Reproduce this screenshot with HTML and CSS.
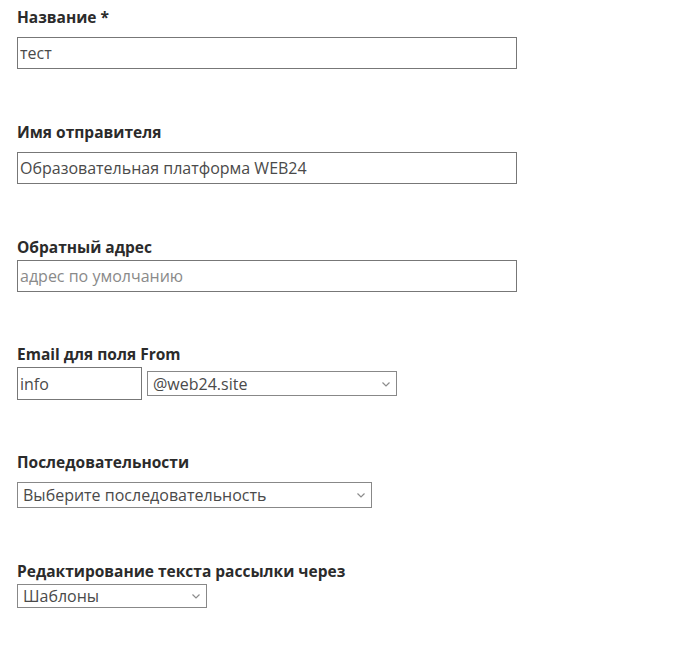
FILE: index.html
```html
<!DOCTYPE html>
<html lang="ru">
<head>
    <meta charset="UTF-8" />
    <meta name="viewport" content="width=device-width, initial-scale=1.0" />
    <title>Рассылка</title>
    <link rel="stylesheet" href="styles.css">
</head>
<body>
    <form class="form">
        <div class="field">
            <label class="field-label" for="name">Название *</label>
            <input class="text-input wide" type="text" id="name" value="тест" />
        </div>

        <div class="field">
            <label class="field-label" for="sender">Имя отправителя</label>
            <input class="text-input wide" type="text" id="sender" value="Образовательная платформа WEB24" />
        </div>

        <div class="field">
            <label class="field-label tight" for="reply">Обратный адрес</label>
            <input class="text-input wide" type="text" id="reply" placeholder="адрес по умолчанию" />
        </div>

        <div class="field">
            <label class="field-label tight" for="from">Email для поля From</label>
            <div class="email-row">
                <input class="text-input short" type="text" id="from" value="info" />
                <div class="select-wrap domain">
                    <select class="select">
                        <option>@web24.site</option>
                    </select>
                    <svg class="chevron" width="8" height="5" viewBox="0 0 8 5"><path d="M0.5 0.5 L4 4 L7.5 0.5" fill="none" stroke="#8c8c8c" stroke-width="1.2"/></svg>
                </div>
            </div>
        </div>

        <div class="field">
            <label class="field-label" for="sequence">Последовательности</label>
            <div class="select-wrap sequence">
                <select class="select" id="sequence">
                    <option>Выберите последовательность</option>
                </select>
                <svg class="chevron" width="8" height="5" viewBox="0 0 8 5"><path d="M0.5 0.5 L4 4 L7.5 0.5" fill="none" stroke="#8c8c8c" stroke-width="1.2"/></svg>
            </div>
        </div>

        <div class="field">
            <label class="field-label tight" for="editor">Редактирование текста рассылки через</label>
            <div class="select-wrap editor">
                <select class="select" id="editor">
                    <option>Шаблоны</option>
                </select>
                <svg class="chevron" width="8" height="5" viewBox="0 0 8 5"><path d="M0.5 0.5 L4 4 L7.5 0.5" fill="none" stroke="#8c8c8c" stroke-width="1.2"/></svg>
            </div>
        </div>
    </form>
</body>
</html>
```

FILE: styles.css
```css
* {
    box-sizing: border-box;
}

body {
    margin: 0;
    padding: 7px 17px;
    background: #fff;
    font-family: 'Open Sans', 'Liberation Sans', sans-serif;
    color: #333;
}

.field {
    margin-bottom: 53px;
}

.field:nth-child(3),
.field:nth-child(4) {
    margin-bottom: 52px;
}

.field-label {
    display: block;
    font-size: 15.5px;
    line-height: 20px;
    font-weight: 700;
    color: #2b2b2b;
    margin-bottom: 10px;
}

.field-label.tight {
    margin-bottom: 3px;
}

.text-input {
    display: block;
    height: 32px;
    padding: 0 2px;
    border: 1px solid #777;
    border-radius: 0;
    font-family: inherit;
    font-size: 16px;
    color: #4a4a4a;
    background: #fff;
}

.text-input::placeholder {
    color: #8a8a8a;
}

.wide {
    width: 500px;
}

.short {
    width: 125px;
    height: 33px;
}

.email-row {
    display: flex;
    align-items: center;
    gap: 5px;
}

.select-wrap {
    position: relative;
    height: 25px;
}

.select {
    -webkit-appearance: none;
    appearance: none;
    display: block;
    width: 100%;
    height: 100%;
    padding: 0 20px 0 5px;
    border: 1px solid #888;
    border-radius: 0;
    font-family: inherit;
    font-size: 16px;
    color: #4a4a4a;
    background: #fff;
}

.chevron {
    position: absolute;
    right: 7px;
    top: 50%;
    margin-top: -2px;
    pointer-events: none;
}

.domain {
    width: 250px;
}

.sequence {
    width: 355px;
    height: 26px;
}

.editor {
    width: 190px;
    height: 24px;
}
```
